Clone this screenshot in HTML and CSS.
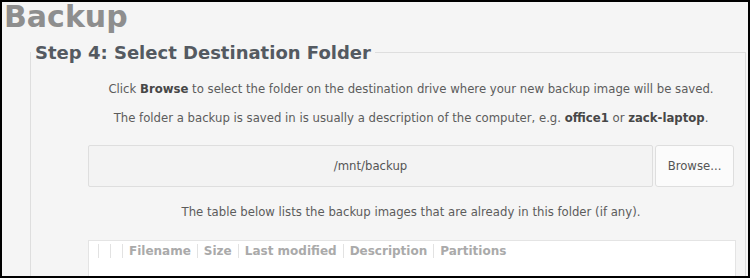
FILE: index.html
```html
<!DOCTYPE html>
<html>
<head>
<meta charset="utf-8">
<link rel="stylesheet" href="styles.css">
</head>
<body>
<div class="frame">
  <h1 class="title">Backup</h1>
  <fieldset class="step">
    <legend class="step-legend">Step 4: Select Destination Folder</legend>
    <div class="step-body">
      <p class="info">Click <b>Browse</b> to select the folder on the destination drive where your new backup image will be saved.</p>
      <p class="info">The folder a backup is saved in is usually a description of the computer, e.g. <b>office1</b> or <b>zack-laptop</b>.</p>
      <div class="path-row">
        <div class="path-field">/mnt/backup</div>
        <div class="browse-btn">Browse...</div>
      </div>
      <p class="info info-table">The table below lists the backup images that are already in this folder (if any).</p>
      <div class="image-table">
        <div class="table-head">
          <span class="th th-empty"></span>
          <span class="th th-empty"></span>
          <span class="th">Filename</span>
          <span class="th">Size</span>
          <span class="th">Last modified</span>
          <span class="th">Description</span>
          <span class="th">Partitions</span>
        </div>
      </div>
    </div>
  </fieldset>
</div>
</body>
</html>
```

FILE: styles.css
```css
html, body {
  margin: 0;
  padding: 0;
  background: #000;
}

.frame {
  width: 750px;
  height: 278px;
  box-sizing: border-box;
  border: 2px solid #000;
  background: #f5f5f5;
  overflow: hidden;
  font-family: "DejaVu Sans", sans-serif;
}

.title {
  margin: 0;
  padding-left: 2px;
  font-size: 30px;
  line-height: 30px;
  font-weight: bold;
  color: #8e8e8e;
}

.step {
  margin: 10px 2px 0 28px;
  padding: 0;
  border: 1px solid #dedede;
  min-width: 0;
}

.step-legend {
  padding: 0 4px;
  font-size: 18px;
  font-weight: bold;
  color: #545a61;
}

.step-body {
  padding: 6px 11px 0 57px;
}

.info {
  margin: 12px 0 0;
  font-size: 11.7px;
  line-height: 17px;
  text-align: center;
  color: #5c5c5c;
}

.info b {
  color: #474747;
}

.info-table {
  margin-top: 17px;
}

.path-row {
  display: flex;
  gap: 2px;
  height: 42px;
  margin-top: 18px;
}

.path-field {
  flex: 1;
  display: flex;
  align-items: center;
  justify-content: center;
  background: #f3f3f3;
  border: 1px solid #dedede;
  border-radius: 2px;
  font-size: 11.7px;
  color: #555;
}

.browse-btn {
  width: 79px;
  box-sizing: border-box;
  display: flex;
  align-items: center;
  justify-content: center;
  background: #fbfbfb;
  border: 1px solid #dedede;
  border-radius: 3px;
  font-size: 11.7px;
  color: #555;
}

.image-table {
  margin: 19px -2px 0 0;
  height: 60px;
  background: #fff;
  border: 1px solid #e4e4e4;
}

.table-head {
  display: flex;
  padding: 3px 0 0 9px;
}

.th {
  padding: 0 6px;
  border-left: 1px solid #e2e2e2;
  font-size: 12px;
  line-height: 14px;
  font-weight: bold;
  color: #aaaaaa;
  white-space: nowrap;
}

.th-empty {
  padding: 0;
  width: 11px;
  height: 14px;
}
```
